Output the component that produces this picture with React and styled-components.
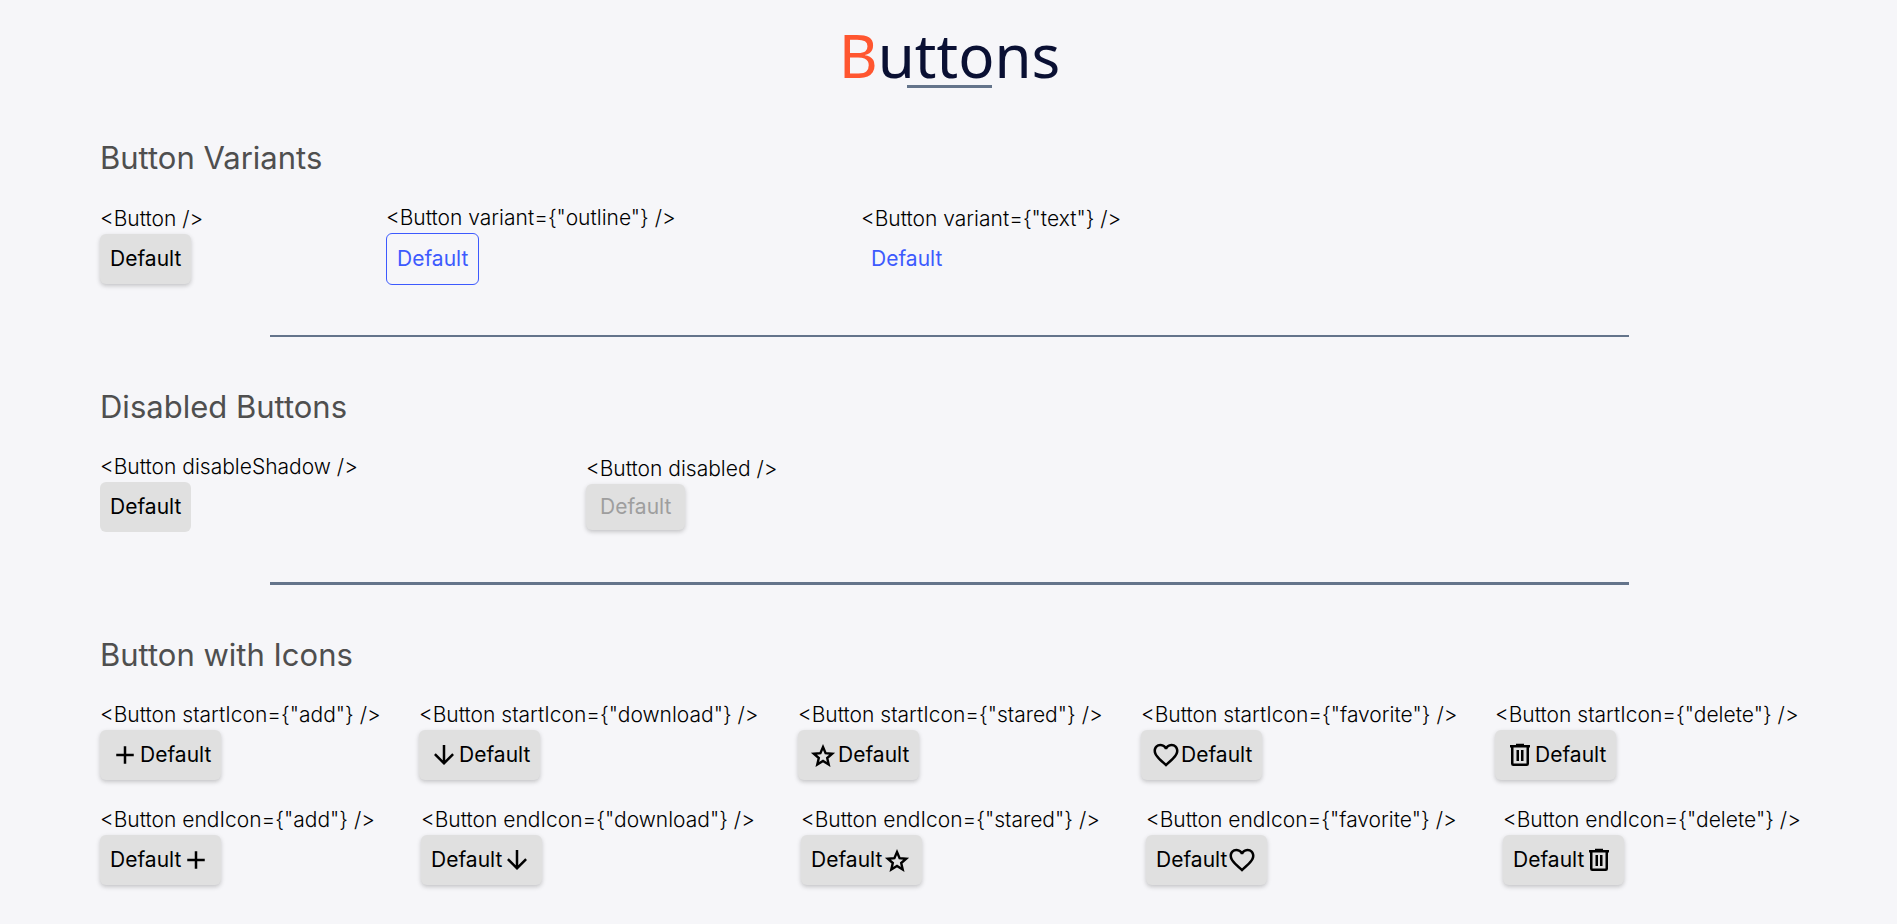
import React from "react";
import styled, { createGlobalStyle, css } from "styled-components";
import { MdAdd, MdArrowDownward } from "react-icons/md";

const GlobalStyle = createGlobalStyle`
  * { box-sizing: border-box; }
  body {
    margin: 0;
    background: #f6f6f9;
    color: #000;
    font-family: Inter, "Noto Sans", sans-serif;
    font-size: 21px;
  }
`;

const Page = styled.main`
  padding: 13px 98px 39px 100px;
`;

const Title = styled.h1`
  margin: 0;
  font-family: "Noto Sans", sans-serif;
  font-size: 60px;
  font-weight: 400;
  line-height: 84px;
  text-align: center;
  color: #0a1033;
  &::first-letter { color: #ff5630; }
`;

const TitleRule = styled.hr`
  position: relative;
  width: 5%;
  height: 3px;
  margin: -12px auto 0;
  border: 0;
  background: #64748b;
`;

const Section = styled.section`
  padding-top: 48px;
`;

const Heading = styled.h2`
  margin: 0 0 23px;
  font-size: 31px;
  font-weight: 400;
  line-height: 44px;
  color: #4f4f4f;
`;

const Row = styled.div`
  display: grid;
  grid-template-columns: ${(p) => p.$columns.map((n) => `minmax(0, ${n}fr)`).join(" ")};
  align-items: center;
  & + & { margin-top: 25px; }
`;

const Example = styled.label`
  display: flex;
  flex-direction: column;
  align-items: flex-start;
  font-weight: 300;
  line-height: 30px;
  white-space: nowrap;
`;

const Divider = styled.hr`
  width: 80%;
  height: ${(p) => p.$thickness}px;
  margin: 50px auto 0;
  border: 0;
  background: #64748b;
`;

const variants = {
  filled: css`
    background: #e0e0e0;
    color: #000;
    box-shadow: 0 2px 4px rgba(51, 51, 51, 0.25);
  `,
  outline: css`
    border: 1px solid #3d5afe;
    background: transparent;
    color: #3d5afe;
  `,
  text: css`
    background: transparent;
    color: #3d5afe;
  `,
};

const StyledButton = styled.button`
  display: flex;
  align-items: center;
  padding: 10px;
  border: 0;
  border-radius: 6px;
  font: inherit;
  font-weight: 400;
  ${(p) => variants[p.$variant]}
  ${(p) => p.$flat && "box-shadow: none;"}
  &:disabled {
    padding: 8px 14px;
    color: #9e9e9e;
  }
  svg { width: 30px; height: 30px; flex: none; }
`;

const StarIcon = () => (
  <svg viewBox="0 0 30 30" fill="none" stroke="currentColor" strokeWidth="2.4" aria-hidden="true">
    <path d="M15 7l2.600 6.100 6.600.6-5 4.300 1.500 6.500-5.700-3.500L9.300 24.500l1.500-6.500-5-4.300 6.600-.6z" />
  </svg>
);
const HeartIcon = () => (
  <svg viewBox="0 0 24 24" fill="currentColor" aria-hidden="true">
    <path d="M16.500 3c-1.740 0-3.410.81-4.500 2.090C10.910 3.810 9.240 3 7.500 3 4.420 3 2 5.420 2 8.500c0 3.780 3.400 6.860 8.550 11.540L12 21.350l1.450-1.320C18.600 15.360 22 12.280 22 8.500 22 5.420 19.580 3 16.500 3zm-4.400 15.550l-.1.1-.1-.1C7.140 14.240 4 11.390 4 8.500 4 6.500 5.500 5 7.500 5c1.540 0 3.040.99 3.570 2.360h1.870C13.460 5.990 14.960 5 16.500 5c2 0 3.500 1.500 3.500 3.500 0 2.890-3.140 5.740-7.900 10.050z" />
  </svg>
);
const TrashIcon = () => (
  <svg viewBox="0 0 30 30" fill="none" stroke="currentColor" strokeWidth="2.500" aria-hidden="true">
    <path d="M5 6.250h20" />
    <path d="M11 5h8" />
    <path d="M7.250 7v16.750q0 1 1 1h13.500q1 0 1-1V7" />
    <path d="M12.750 10v11M17.250 10v11" />
  </svg>
);

const icons = {
  add: MdAdd,
  download: MdArrowDownward,
  stared: StarIcon,
  favorite: HeartIcon,
  delete: TrashIcon,
};

function Button({ variant = "filled", startIcon, endIcon, disableShadow, ...rest }) {
  const Start = icons[startIcon];
  const End = icons[endIcon];
  return (
    <StyledButton type="button" $variant={variant} $flat={disableShadow} {...rest}>
      {Start && <Start />}
      Default
      {End && <End />}
    </StyledButton>
  );
}

const Demo = ({ code, id, ...props }) => (
  <Example htmlFor={id}>
    {code}
    <Button id={id} {...props} />
  </Example>
);

const iconNames = Object.keys(icons);

export default function App() {
  return (
    <>
      <GlobalStyle />
      <Page>
        <Title>Buttons</Title>
        <TitleRule />

        <Section>
          <Heading>Button Variants</Heading>
          <Row $columns={[286, 475, 938]}>
            <Demo id="filled" code={"<Button />"} />
            <Demo id="outline" code={'<Button variant={"outline"} />'} variant="outline" />
            <Demo id="text" code={'<Button variant={"text"} />'} variant="text" />
          </Row>
          <Divider $thickness={2} />
        </Section>

        <Section>
          <Heading>Disabled Buttons</Heading>
          <Row $columns={[486, 1213]}>
            <Demo id="flat" code={"<Button disableShadow />"} disableShadow />
            <Demo id="disabled" code={"<Button disabled />"} disabled />
          </Row>
          <Divider $thickness={3} />
        </Section>

        <Section>
          <Heading>Button with Icons</Heading>
          <Row $columns={[319, 379, 343, 354, 304]}>
            {iconNames.map((name) => (
              <Demo key={name} id={`start-${name}`} code={`<Button startIcon={"${name}"} />`} startIcon={name} />
            ))}
          </Row>
          <Row $columns={[321, 380, 345, 357, 296]}>
            {iconNames.map((name) => (
              <Demo key={name} id={`end-${name}`} code={`<Button endIcon={"${name}"} />`} endIcon={name} />
            ))}
          </Row>
        </Section>
      </Page>
    </>
  );
}
